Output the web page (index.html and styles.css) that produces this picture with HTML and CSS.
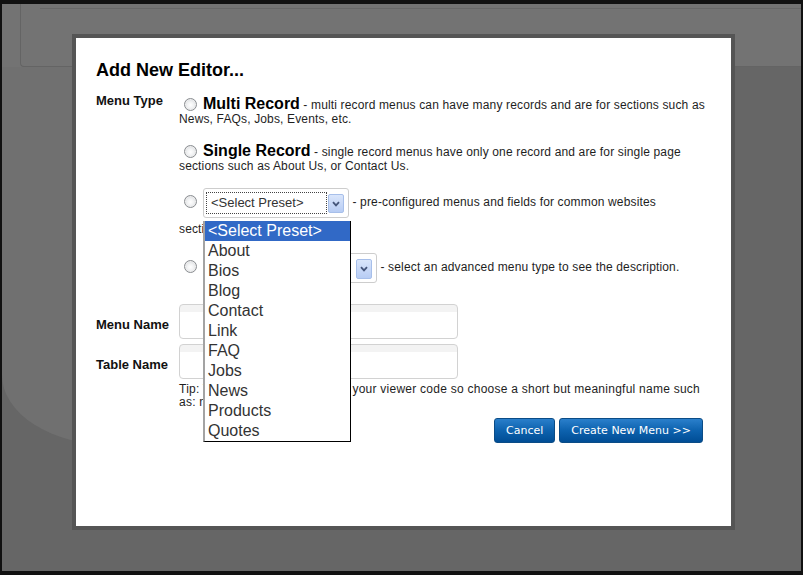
FILE: index.html
```html
<!DOCTYPE html>
<html lang="en">
<head>
<meta charset="utf-8">
<title>Add New Editor</title>
<link rel="stylesheet" href="styles.css">
</head>
<body>
<div class="screen">
  <div class="bg-top">
    <div class="bg-panel"><div class="bg-panel-line"></div></div>
  </div>
  <div class="bg-light"></div>

  <div class="modal">
    <h2 class="modal-title">Add New Editor...</h2>

    <div class="type-row">
      <div class="type-label">Menu Type</div>
      <div class="options">
        <div class="opt opt-multi"><span class="radio"></span><b class="opt-name">Multi Record</b> - multi record menus can have many records and are for sections such as<br>News, FAQs, Jobs, Events, etc.</div>
        <div class="opt opt-single"><span class="radio"></span><b class="opt-name">Single Record</b> - single record menus have only one record and are for single page<br>sections such as About Us, or Contact Us.</div>
        <div class="opt opt-preset"><span class="radio"></span><span class="select select-preset"><span class="select-inner"><span class="select-value">&lt;Select Preset&gt;</span><span class="select-arrow"><svg width="8" height="6" viewBox="0 0 8 6"><path d="M1 1.2 L4 4.4 L7 1.2" fill="none" stroke="#44557a" stroke-width="1.8"/></svg></span></span></span> - pre-configured menus and fields for common websites<br>sections like blogs, news, etc.</div>
        <div class="opt opt-advanced"><span class="radio"></span><span class="select select-advanced"><span class="select-inner"><span class="select-value select-value-plain">Advanced</span><span class="select-arrow"><svg width="8" height="6" viewBox="0 0 8 6"><path d="M1 1.2 L4 4.4 L7 1.2" fill="none" stroke="#44557a" stroke-width="1.8"/></svg></span></span></span> - select an advanced menu type to see the description.</div>
      </div>
    </div>

    <div class="field-row field-row-first">
      <div class="field-label">Menu Name</div>
      <div class="field-input"></div>
    </div>
    <div class="field-row">
      <div class="field-label">Table Name</div>
      <div class="field-input"></div>
    </div>
    <div class="tip">Tip: This name will be used for your viewer code so choose a short but meaningful name such<br>as: news, products, etc.</div>

    <div class="actions">
      <button class="btn" type="button">Cancel</button>
      <button class="btn" type="button">Create New Menu &gt;&gt;</button>
    </div>

    <ul class="dropdown">
      <li class="dd-item dd-active">&lt;Select Preset&gt;</li>
      <li class="dd-item">About</li>
      <li class="dd-item">Bios</li>
      <li class="dd-item">Blog</li>
      <li class="dd-item">Contact</li>
      <li class="dd-item">Link</li>
      <li class="dd-item">FAQ</li>
      <li class="dd-item">Jobs</li>
      <li class="dd-item">News</li>
      <li class="dd-item">Products</li>
      <li class="dd-item">Quotes</li>
    </ul>
  </div>
</div>
</body>
</html>
```

FILE: styles.css
```css
* { box-sizing: border-box; }

html, body {
  margin: 0;
  padding: 0;
}

body {
  width: 803px;
  height: 575px;
  overflow: hidden;
  background: #111111;
  font-family: "Liberation Sans", Arial, sans-serif;
}

.screen {
  margin: 4px 2px 0 2px;
  height: 567px;
  background: #666666;
  position: relative;
  overflow: hidden;
}

/* background page (behind the overlay) */
.bg-top {
  height: 63px;
  background: #737373;
}

.bg-panel {
  margin-left: 18px;
  height: 63px;
  border-left: 1px solid #646464;
  border-bottom: 1px solid #646464;
  border-bottom-left-radius: 4px;
}

.bg-panel-line {
  margin-left: 19px;
  height: 5px;
  border-bottom: 1px solid #676767;
}

.bg-light {
  width: 300px;
  height: 378px;
  background: #707070;
  border-bottom-left-radius: 110px 70px;
}

/* modal */
.modal {
  position: absolute;
  left: 70px;
  top: 30px;
  width: 663px;
  height: 496px;
  border: 4px solid #555555;
  background: #ffffff;
  padding: 22px 25px 0 20px;
  color: #1e1e1e;
}

.modal-title {
  margin: 0;
  font-size: 18px;
  line-height: 20px;
  font-weight: bold;
  color: #000000;
}

.type-row {
  display: grid;
  grid-template-columns: 83px 1fr;
  margin-top: 14px;
  font-size: 12px;
  line-height: 14px;
}

.type-label {
  font-size: 13px;
  font-weight: bold;
  color: #111111;
}

.options {
  padding-top: 3px;
  letter-spacing: 0.15px;
  white-space: nowrap;
}

.opt-name {
  font-size: 16px;
  font-weight: bold;
  color: #000000;
  letter-spacing: 0;
}

.opt-single { margin-top: 18px; }
.opt-preset { margin-top: 15px; }
.opt-advanced { margin-top: 17px; }

.radio {
  display: inline-block;
  width: 13px;
  height: 13px;
  margin: 0 6px 0 5px;
  border: 1px solid #8a8d91;
  border-radius: 50%;
  background: radial-gradient(circle at 50% 55%, #ffffff 0%, #f1f2f3 40%, #c9ccd1 100%);
  box-shadow: inset 0 0 0 1px #eeeeee;
  vertical-align: -2px;
}

/* fake select boxes */
.select {
  display: inline-block;
  overflow: hidden;
  height: 30px;
  margin-bottom: 4px;
  border: 1px solid #cdcdcd;
  border-radius: 3px;
  background: #ffffff;
  vertical-align: -16px;
  letter-spacing: 0;
}

.select-preset { width: 146px; }
.select-advanced { width: 174px; }

.select-inner {
  display: flex;
  height: 100%;
  padding: 3px 4px 3px 2px;
}

.select-value {
  flex: 1;
  border: 1px dotted #444444;
  padding-left: 4px;
  font-size: 13px;
  line-height: 20px;
  color: #333333;
}

.select-value-plain {
  border-color: transparent;
  color: transparent;
}

.select-arrow {
  width: 16px;
  height: 19px;
  margin: 2px 0 0 1px;
  border: 1px solid #a7bfea;
  border-radius: 2px;
  background: linear-gradient(#dae6fb, #b7ccf4);
  display: flex;
  align-items: center;
  justify-content: center;
}

.select-advanced .select-arrow {
  height: 20px;
  margin-top: 2px;
}

/* name fields */
.field-row {
  display: flex;
  align-items: center;
  margin-top: 5px;
}

.field-row-first { margin-top: 17px; }

.field-label {
  width: 83px;
  padding-top: 6px;
  font-size: 13px;
  line-height: 14px;
  font-weight: bold;
  color: #111111;
}

.field-input {
  width: 279px;
  height: 35px;
  border: 1px solid #d2d2d2;
  border-radius: 4px;
  background: linear-gradient(#f3f3f3 0, #f3f3f3 7px, #ffffff 7px);
}

.tip {
  margin: 4px 0 0 83px;
  font-size: 12px;
  line-height: 13px;
  letter-spacing: 0.25px;
  white-space: nowrap;
}

/* buttons */
.actions {
  display: flex;
  justify-content: flex-end;
  gap: 4px;
  margin-top: 9px;
  padding-right: 3px;
}

.btn {
  height: 25px;
  padding: 0 11px;
  border: 1px solid #0b4c86;
  border-radius: 3px;
  background: linear-gradient(#2a7fcb 0%, #0d62ae 50%, #004d95 100%);
  color: #ffffff;
  font-family: "DejaVu Sans", Verdana, sans-serif;
  font-size: 11px;
  line-height: 23px;
}

/* open dropdown list */
.dropdown {
  position: absolute;
  left: 127px;
  top: 183px;
  width: 148px;
  margin: 0;
  padding: 0;
  list-style: none;
  background: #ffffff;
  border: 1px solid #000000;
  border-top: 0;
  border-left: 2px solid #a3a3a3;
  font-size: 16px;
  line-height: 20px;
  color: #333333;
}

.dd-item {
  padding-left: 3px;
  height: 20px;
  white-space: nowrap;
}

.dd-active {
  background: #3169c6;
  color: #ffffff;
}
```
